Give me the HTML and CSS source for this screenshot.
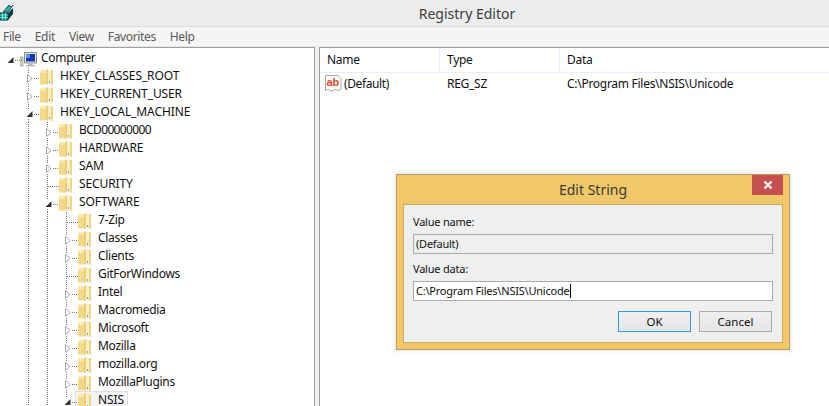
FILE: index.html
```html
<!DOCTYPE html>
<html lang="en">
<head>
  <meta charset="UTF-8">
  <title>Registry Editor</title>
  <link rel="stylesheet" href="styles.css">
</head>
<body>
  <svg class="defs" width="0" height="0">
    <symbol id="folder" viewBox="0 0 13 16">
      <path d="M0 2 L2 1 H6 V15.5 H0 Z" fill="#f3d98a"/>
      <path d="M0 2 L2 1 H6 V4 H0 Z" fill="#f9e9ac"/>
      <path d="M6 1 L8 0 V15.5 H6 Z" fill="#ecce7c"/>
      <path d="M8 0 L9.5 1 H13 V15.5 H8 Z" fill="#fbefc0"/>
      <path d="M11 1 H13 V15.5 H11 Z" fill="#efd48a"/>
      <path d="M9.5 12 V14" stroke="#5aa5dc" stroke-width="1"/>
    </symbol>
    <symbol id="open" viewBox="0 0 14 18">
      <path d="M2.5 0 V5 M2.5 15 V18 M8 10.5 H14" stroke="#777" stroke-dasharray="1 1"/>
      <path d="M.5 13 H6.5 V7 Z" fill="#333"/>
    </symbol>
    <symbol id="closed" viewBox="0 0 14 18">
      <path d="M2.5 0 V5 M2.5 16 V18 M8 10.5 H14" stroke="#777" stroke-dasharray="1 1"/>
      <path d="M1.5 6.5 L6 10.5 L1.5 14.5 Z" fill="#fff" stroke="#a6a6a6"/>
    </symbol>
    <symbol id="leaf" viewBox="0 0 14 18">
      <path d="M2.5 0 V18 M3 10.5 H14" stroke="#777" stroke-dasharray="1 1"/>
    </symbol>
  </svg>

  <div class="app">
    <header class="titlebar">
      <svg class="appicon" width="14" height="19" viewBox="0 0 14 19">
        <path d="M0 11 H8 V18 H0 Z" fill="#16a9a0" stroke="#0a2a2a"/>
        <path d="M0 13 H8 M0 15.5 H8 M2.5 11 V18 M5.5 11 V18" stroke="#7fe8de" stroke-width=".8"/>
        <path d="M8 11 L13 6 V12 L8 18 Z" fill="#0d3b40"/>
        <path d="M3 10 L9 3 L11 5 L13 3 L8 10 Z" fill="#23b8ac" stroke="#0a2a2a" stroke-width=".8"/>
      </svg>
      <span class="title">Registry Editor</span>
    </header>

    <nav class="menubar">
      <span>File</span><span>Edit</span><span>View</span><span>Favorites</span><span>Help</span>
    </nav>

    <main class="panes">
      <section class="tree">
        <div class="row">
          <svg class="node"><path d="M8 10.5 H14" stroke="#777" stroke-dasharray="1 1"/><path d="M.5 13 H6.5 V7 Z" fill="#333"/></svg>
          <svg class="computer" width="17" height="15" viewBox="0 0 17 15">
            <path d="M0 5 H3 V14 H0 Z" fill="#d8d4bc" stroke="#8a8a78" stroke-width=".6"/>
            <path d="M1 8 H2" stroke="#4a9a4a"/>
            <path d="M4.5 .5 H16.5 V11 H4.5 Z" fill="#e4e4e4" stroke="#8b8b8b"/>
            <path d="M6 2 H15 V9.5 H6 Z" fill="#1238b8"/>
            <path d="M6 2 H10 V6 H6 Z" fill="#5f8fe0"/>
            <path d="M8 11 H13 V13 H15 V14.5 H6 V13 H8 Z" fill="#bcbcbc"/>
          </svg>
          <span class="label">Computer</span>
        </div>
        <div class="row"><i class="guide blank"></i><svg class="node"><use href="#closed"/></svg><svg class="folder"><use href="#folder"/></svg><span class="label caps">HKEY_CLASSES_ROOT</span></div>
        <div class="row"><i class="guide blank"></i><svg class="node"><use href="#closed"/></svg><svg class="folder"><use href="#folder"/></svg><span class="label caps">HKEY_CURRENT_USER</span></div>
        <div class="row"><i class="guide blank"></i><svg class="node"><use href="#open"/></svg><svg class="folder"><use href="#folder"/></svg><span class="label caps">HKEY_LOCAL_MACHINE</span></div>

        <div class="row"><i class="guide blank"></i><i class="guide"></i><svg class="node"><use href="#closed"/></svg><svg class="folder"><use href="#folder"/></svg><span class="label digits">BCD00000000</span></div>
        <div class="row"><i class="guide blank"></i><i class="guide"></i><svg class="node"><use href="#closed"/></svg><svg class="folder"><use href="#folder"/></svg><span class="label caps">HARDWARE</span></div>
        <div class="row"><i class="guide blank"></i><i class="guide"></i><svg class="node"><use href="#closed"/></svg><svg class="folder"><use href="#folder"/></svg><span class="label caps">SAM</span></div>
        <div class="row"><i class="guide blank"></i><i class="guide"></i><svg class="node"><use href="#leaf"/></svg><svg class="folder"><use href="#folder"/></svg><span class="label caps">SECURITY</span></div>
        <div class="row"><i class="guide blank"></i><i class="guide"></i><svg class="node"><use href="#open"/></svg><svg class="folder"><use href="#folder"/></svg><span class="label caps">SOFTWARE</span></div>

        <div class="row"><i class="guide blank"></i><i class="guide"></i><i class="guide"></i><svg class="node"><use href="#leaf"/></svg><svg class="folder"><use href="#folder"/></svg><span class="label">7-Zip</span></div>
        <div class="row"><i class="guide blank"></i><i class="guide"></i><i class="guide"></i><svg class="node"><use href="#closed"/></svg><svg class="folder"><use href="#folder"/></svg><span class="label">Classes</span></div>
        <div class="row"><i class="guide blank"></i><i class="guide"></i><i class="guide"></i><svg class="node"><use href="#closed"/></svg><svg class="folder"><use href="#folder"/></svg><span class="label">Clients</span></div>
        <div class="row"><i class="guide blank"></i><i class="guide"></i><i class="guide"></i><svg class="node"><use href="#leaf"/></svg><svg class="folder"><use href="#folder"/></svg><span class="label">GitForWindows</span></div>
        <div class="row"><i class="guide blank"></i><i class="guide"></i><i class="guide"></i><svg class="node"><use href="#closed"/></svg><svg class="folder"><use href="#folder"/></svg><span class="label">Intel</span></div>
        <div class="row"><i class="guide blank"></i><i class="guide"></i><i class="guide"></i><svg class="node"><use href="#closed"/></svg><svg class="folder"><use href="#folder"/></svg><span class="label">Macromedia</span></div>
        <div class="row"><i class="guide blank"></i><i class="guide"></i><i class="guide"></i><svg class="node"><use href="#closed"/></svg><svg class="folder"><use href="#folder"/></svg><span class="label">Microsoft</span></div>
        <div class="row"><i class="guide blank"></i><i class="guide"></i><i class="guide"></i><svg class="node"><use href="#closed"/></svg><svg class="folder"><use href="#folder"/></svg><span class="label">Mozilla</span></div>
        <div class="row"><i class="guide blank"></i><i class="guide"></i><i class="guide"></i><svg class="node"><use href="#closed"/></svg><svg class="folder"><use href="#folder"/></svg><span class="label">mozilla.org</span></div>
        <div class="row"><i class="guide blank"></i><i class="guide"></i><i class="guide"></i><svg class="node"><use href="#closed"/></svg><svg class="folder"><use href="#folder"/></svg><span class="label">MozillaPlugins</span></div>
        <div class="row selected"><i class="guide blank"></i><i class="guide"></i><i class="guide"></i><svg class="node"><use href="#open"/></svg><svg class="folder"><use href="#folder"/></svg><span class="label caps">NSIS</span></div>
      </section>

      <section class="list">
        <div class="list-head">
          <span class="col-name">Name</span>
          <span class="col-type">Type</span>
          <span class="col-data">Data</span>
        </div>
        <div class="list-row">
          <span class="col-name">
            <svg class="abicon" width="17" height="17" viewBox="0 0 17 17">
              <path d="M.5 .5 H13 L16 3.5 V14 L13.5 15.5 L10 14.5 L6 16 L3 14.5 L.5 15.5 Z" fill="#fff" stroke="#a8a8a8"/>
              <text x="1.5" y="10.5" class="abtext">ab</text>
            </svg>
            (Default)
          </span>
          <span class="col-type">REG_SZ</span>
          <span class="col-data">C:\Program Files\NSIS\Unicode</span>
        </div>
      </section>
    </main>
  </div>

  <div class="dialog">
    <div class="dialog-title">
      <span>Edit String</span>
      <button class="close">
        <svg width="10" height="10" viewBox="0 0 10 10"><path d="M1.5 1.5 L8.5 8.5 M8.5 1.5 L1.5 8.5" stroke="#fff" stroke-width="2"/></svg>
      </button>
    </div>
    <div class="dialog-body">
      <div class="field-label">Value name:</div>
      <div class="field readonly">(Default)</div>
      <div class="field-label second">Value data:</div>
      <div class="field">C:\Program Files\NSIS\Unicode<i class="caret"></i></div>
      <div class="buttons">
        <button class="btn primary">OK</button>
        <button class="btn">Cancel</button>
      </div>
    </div>
  </div>
</body>
</html>
```

FILE: styles.css
```css
html, body { margin: 0; height: 100%; overflow: hidden; }
body { font-family: "Noto Sans", sans-serif; font-size: 12px; color: #111; background: #f0f0f0; position: relative; }
.defs { position: absolute; }

.app { display: flex; flex-direction: column; height: 406px; }

.titlebar { height: 26px; flex: none; display: flex; align-items: center; justify-content: center; padding-left: 105px; position: relative; background: #ececec; border-bottom: 1px solid #dcdcdc; }
.title { font-size: 14px; color: #3c3c3c; }
.appicon { position: absolute; left: 0; top: 2px; }

.menubar { height: 19px; flex: none; display: flex; gap: 14px; align-items: center; padding-left: 3px; background: #f5f5f5; color: #5a5a5a; letter-spacing: -.35px; border-bottom: 1px solid #e6e6e6; }

.panes { flex: 1; display: flex; gap: 4px; min-height: 0; }

.tree { width: 315px; flex: none; padding: 2px 0 0 7px; box-sizing: border-box; background: #fff; border-top: 1px solid #a0a0a0; border-right: 1px solid #a0a0a0; overflow: hidden; position: relative; z-index: 0; }
.row { display: flex; height: 18px; align-items: flex-start; white-space: nowrap; }
.guide { width: 19px; height: 18px; flex: none; background: repeating-linear-gradient(#777 0 1px, transparent 1px 2px) 2px 0 / 1px 100% no-repeat; }
.guide.blank { background: none; }
.node { width: 14px; height: 18px; flex: none; }
.folder { width: 13px; height: 16px; flex: none; margin-top: 1px; }
.computer { flex: none; margin: 2px 3px 0 -1px; }
.label { margin: -1px 0 0 6px; line-height: 18px; padding: 0 1px; letter-spacing: -.3px; }
.label.caps { letter-spacing: -.1px; }
.label.digits { letter-spacing: -.65px; }
.row .computer + .label { margin-left: 0; }
.selected { position: relative; }
.selected .label { position: relative; }
.selected .label::before { content: ""; position: absolute; left: -22px; right: -3px; top: 0; bottom: -4px; background: #f4f4f4; border: 1px solid #dedede; z-index: -1; }

.list { flex: 1; background: #fff; border-top: 1px solid #a0a0a0; border-left: 1px solid #a0a0a0; letter-spacing: -.28px; }
.list-head { display: flex; height: 24px; align-items: center; border-bottom: 1px solid #e5eefa; }
.list-head span { line-height: 24px; border-right: 1px solid #e5eefa; box-sizing: border-box; }
.list-row { display: flex; height: 21px; align-items: center; }
.col-name { width: 120px; padding-left: 7px; box-sizing: border-box; flex: none; display: flex; align-items: center; gap: 2px; }
.col-type { width: 120px; padding-left: 7px; box-sizing: border-box; flex: none; }
.col-data { padding-left: 7px; flex: 1; }
.list-head .col-data { border-right: 0; }
.list-row .col-name { padding-left: 5px; letter-spacing: -.4px; }
.abtext { font-family: "Liberation Sans", sans-serif; font-size: 11px; font-weight: 700; fill: #d8482a; letter-spacing: 0; }

.dialog { position: absolute; left: 396px; top: 174px; width: 394px; height: 176px; box-sizing: border-box; display: flex; flex-direction: column; background: #f0c869; border: 1px solid #b99e5a; box-shadow: 0 0 6px rgba(0, 0, 0, .15); }
.dialog-title { height: 29px; flex: none; display: flex; align-items: center; justify-content: center; position: relative; font-size: 14px; color: #3a3a3a; }
.close { position: absolute; right: 6px; top: 0; width: 31px; height: 20px; padding: 0; border: 0; background: #c75050; display: flex; align-items: center; justify-content: center; }
.dialog-body { margin: 0 6px 6px 6px; flex: 1; padding: 8px 9px 0 9px; font-size: 11px; letter-spacing: -.22px; background: #efefef; border: 1px solid #c8ab62; }

.field-label { line-height: 18px; height: 21px; }
.field-label.second { margin-top: 6px; height: 21px; }
.field { height: 20px; box-sizing: border-box; line-height: 18px; padding-left: 2px; background: #fff; border: 1px solid #ababab; display: flex; align-items: center; }
.field.readonly { background: #efefef; }
.caret { width: 1px; height: 14px; margin-left: 1px; background: #000; }

.buttons { display: flex; justify-content: flex-end; gap: 8px; margin-top: 10px; padding-right: 1px; }
.btn { width: 73px; height: 21px; padding: 0; font: inherit; font-size: 11.5px; color: #111; border: 1px solid #acacac; background: linear-gradient(#f0f0f0, #e5e5e5); }
.btn.primary { border-color: #3399ff; }
```
